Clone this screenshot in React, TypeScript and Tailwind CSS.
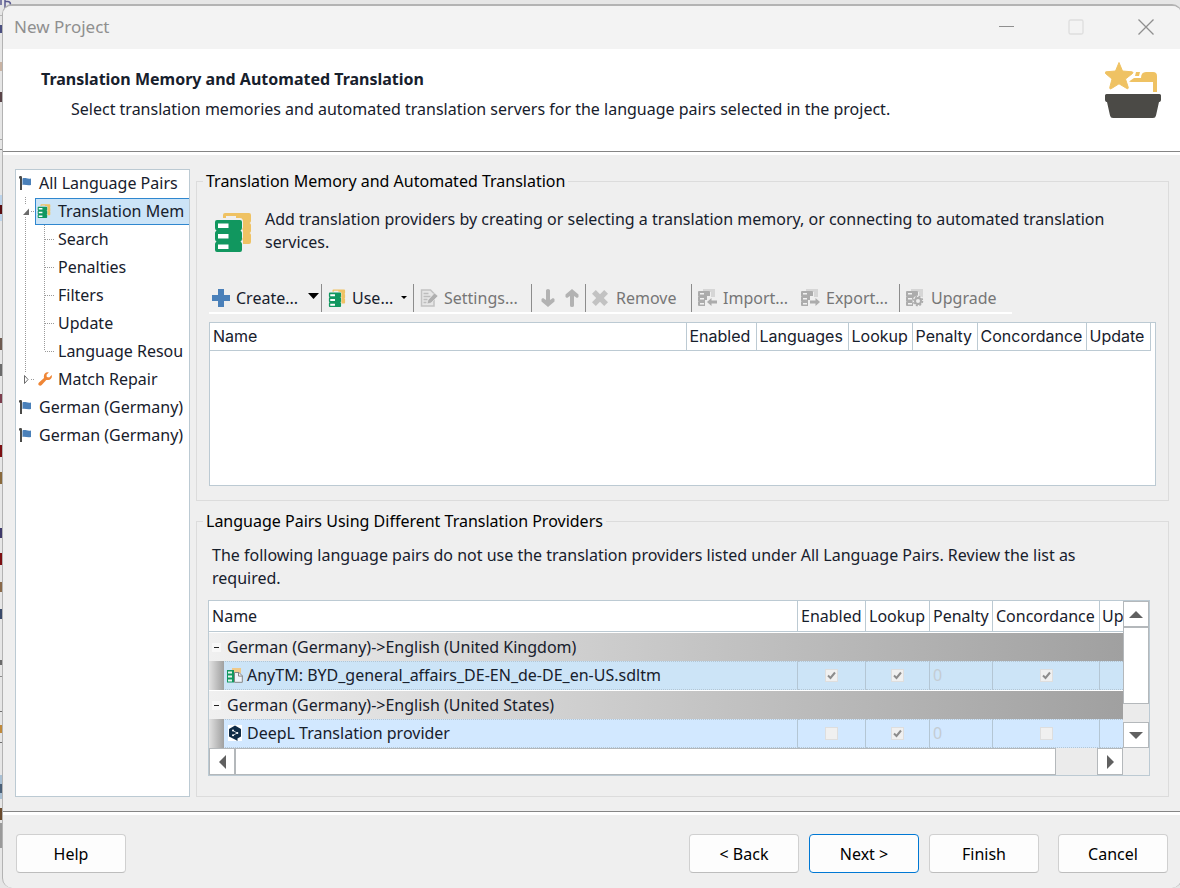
import React from "react";

const FlagIcon = () => (
    <svg width="12" height="14" viewBox="0 0 12 14" className="shrink-0" aria-hidden="true">
        <path d="M0 1.2C0 .5.6 0 1.5 0S3 .5 3 1.2V14H1V2.4H0z" fill="#4a4a48" />
        <path d="M3.5 2.5c2.5-1.4 5 1 8.5 0V9c-3.500 1-6-.8-8.500 0z" fill="#4a80b9" />
    </svg>
);

const MemoryIcon = ({ size }: { size: number }) => (
    <svg width={size} height={size} viewBox="0 0 38 40" className="shrink-0" aria-hidden="true">
        <path
            d="M9 6V3q0-2 2-2h24q2 0 2 2v6q0 1.500-1.500 2 1.500.6 1.500 2v6q0 1.500-1.500 2 1.500.6 1.500 2v7q0 2-2 2h-6V29q0-1.500-1-2 1-.6 1-2v-6q0-1.500-1-2 1-.6 1-2v-5q0-4-3-4h-4V4H12v2z"
            fill="#efc263"
        />
        <path
            d="M3 8h23q2 0 2 2v6q0 1.500-1.500 2.500Q28 19.500 28 21v6q0 1.500-1.500 2.500Q28 30.500 28 32v6q0 2-2 2H3q-2 0-2-2v-6q0-1.500 1.500-2.500Q1 28.500 1 27v-6q0-1.500 1.500-2.500Q1 17.500 1 16v-6q0-2 2-2z"
            fill="#11975f"
        />
        <path d="M4 11.500h10.500v4.500H4zM4 22h10.500v4.500H4zM4 32.500h10.500V37H4z" fill="#fff" />
    </svg>
);

const WrenchIcon = () => (
    <svg width="14" height="14" viewBox="0 0 14 14" className="shrink-0" aria-hidden="true">
        <path
            d="M10.800.4 8.500 2.700l.3 2.400 2.400.3 2.500-2.300c.8 2.400-.8 5-3.400 5-.8 0-1.500-.2-2-.1l-4.600 5c-.8.9-2 .9-2.800.2s-.8-2 .1-2.800l5-4.500C5.300 2.500 7.300-.4 10.800.4z"
            fill="#ef8636"
        />
    </svg>
);

const PlusIcon = () => (
    <svg width="18" height="18" viewBox="0 0 18 18" className="shrink-0" aria-hidden="true">
        <path d="M6 0h6v6h6v6h-6v6H6v-6H0V6h6z" fill="#4a80b9" />
    </svg>
);

const SettingsIcon = () => (
    <svg width="18" height="18" viewBox="0 0 18 18" className="shrink-0" aria-hidden="true">
        <path d="M1.500 1h9l3.500 3.500V17H1.500z" fill="#e6e6e6" stroke="#c2c2c2" strokeWidth="1.500" />
        <path d="M3.500 4.500h5M3.500 7.500h7M3.500 10.500h4M3.500 13.500h3" stroke="#bdbdbd" strokeWidth="1.500" />
        <path d="M7 15l1-4 6.500-7 3.500 3-7 7z" fill="#b0b0b0" stroke="#efefef" strokeWidth=".6" />
    </svg>
);

const ArrowIcon = ({ up }: { up?: boolean }) => (
    <svg width="14" height="18" viewBox="0 0 14 18" className={up ? "rotate-180" : ""} aria-hidden="true">
        <path d="M5 1.500Q5 0 7 0t2 1.500V11l3-2 1.500 1v2.500L7 18 .5 12.500V10L2 9l3 2z" fill="#b2b2b2" />
    </svg>
);

const RemoveIcon = () => (
    <svg width="16" height="16" viewBox="0 0 16 16" className="shrink-0" aria-hidden="true">
        <path d="M3.800 0 8 4.200 12.200 0 16 3.800 11.800 8l4.200 4.200-3.800 3.800L8 11.800 3.800 16 0 12.200 4.200 8 0 3.800z" fill="#c2c2c2" />
    </svg>
);

const TransferIcon = ({ kind }: { kind: "import" | "export" | "upgrade" }) => (
    <svg width="19" height="18" viewBox="0 0 19 18" className="shrink-0" aria-hidden="true">
        <path d="M5 0h12v8h-4V3H5z" fill="#d6d6d6" />
        <path d="M0 3q0-1 1-1h10q1 0 1 1v4H9v4H7v6H1q-1 0-1-1v-3l.6-.5L0 12V8l.6-.5L0 7z" fill="#acacac" />
        <path d="M2 4h4v1.500H2zM2 9h4v1.500H2zM2 14h4v1.500H2z" fill="#f2f2f2" />
        {kind === "import" && <path d="M9 13l4.500-4v2.500H19v3h-5.500V17z" fill="#acacac" />}
        {kind === "export" && <path d="M19 13l-4.500-4v2.500H9v3h5.500V17z" fill="#acacac" />}
        {kind === "upgrade" && (
            <>
                <circle cx="12" cy="12" r="5.500" fill="#efefef" />
                <circle cx="12" cy="12" r="3" fill="none" stroke="#acacac" strokeWidth="2" />
                <circle cx="12" cy="12" r="4.500" fill="none" stroke="#acacac" strokeWidth="1.500" strokeDasharray="2 1.530" />
            </>
        )}
    </svg>
);

const AnyTmIcon = () => (
    <svg width="16" height="15" viewBox="0 0 16 15" className="shrink-0" aria-hidden="true">
        <path d="M5 0h9v5H5z" fill="#efc98a" />
        <path d="M0 2h7v12.500H0z" fill="#11975f" />
        <path d="M1 3.500h4v2H1zM1 7.500h4v2H1zM1 11.500h4v2H1z" fill="#e8f5ef" />
        <path d="M7.500 4.500h4.500l3.300 3.300v6.500H7.500z" fill="#eef4fa" stroke="#858585" />
        <path d="M11.500 4.500v3.600h3.800" fill="none" stroke="#858585" />
    </svg>
);

const DeepLIcon = () => (
    <svg width="14" height="16" viewBox="0 0 14 16" className="shrink-0 bg-white" aria-hidden="true">
        <path d="M7 .5 13 4v7.500l-3.500 2V16L7 14.500 1 11.500V4z" fill="#0f2b46" />
        <path d="M5 5.500 9 8l-4 2.500" fill="none" stroke="#fff" strokeWidth=".7" />
        <circle cx="5" cy="5.600" r="1" fill="#fff" />
        <circle cx="9.300" cy="7.900" r="1" fill="#fff" />
        <circle cx="5" cy="10.300" r="1" fill="#fff" />
    </svg>
);

const WizardIcon = () => (
    <svg width="56" height="58" viewBox="0 0 56 58" className="shrink-0" aria-hidden="true">
        <path
            d="M14 1.500 17.500 10l9.500.8c1 .2 1.200 1 .5 1.700L20.500 18l2.800 8.500c.2 1-.6 1.500-1.500 1L14 22.800l-7.800 4.900c-.9.5-1.700-.1-1.500-1L7 18 .5 12.500c-.8-.7-.4-1.500.5-1.700l9.500-.8z"
            fill="#efc263"
            stroke="#efc263"
            strokeLinejoin="round"
        />
        <path d="M31 11h4l-1 4h-4zM24 20.500l5-3.500h7q0-6 5-6h7q4 0 4 4v16h-4V21H26z" fill="#efc263" />
        <path d="M1.500 33h53q1.500 0 1.500 1.500V39q0 1.500-1.500 2H54l-3 13.500q-.5 2.500-3 2.500H8q-2.500 0-3-2.500L2 41h-.5Q0 40.500 0 39v-4.500Q0 33 1.500 33z" fill="#4b4a46" />
    </svg>
);

type Branch = "open" | "closed" | "leaf" | "last";

const TreeLines = ({ branch }: { branch: Branch }) => (
    <svg width="42" height="28" viewBox="0 0 42 28" className="shrink-0" aria-hidden="true">
        <g stroke="#9a9a9a" strokeDasharray="1 1" fill="none">
            {branch === "closed" ? <path d="M9.500 0v8M15 14.500h4" /> : <path d="M9.500 0v28" />}
            {branch === "open" && <path d="M15 14.500h4" />}
            {branch === "leaf" && <path d="M28.500 0v28M29 14.500h9" />}
            {branch === "last" && <path d="M28.500 0v14M29 14.500h9" />}
        </g>
        {branch === "open" && <path d="M5 8h8v11H5z" fill="#fff" />}
        {branch === "open" && <path d="M13 11.500V18H7z" fill="#6b6b6b" />}
        {branch === "closed" && <path d="M8.500 10.500v8l3.500-4z" fill="#fff" stroke="#6b6b6b" />}
    </svg>
);

const leaves = ["Search", "Penalties", "Filters", "Update", "Language Resou"];

const NavigationTree = () => (
    <nav className="w-[175px] shrink-0 overflow-hidden border border-[#bccad3] bg-white whitespace-nowrap text-[#17202c]">
        <div className="-mt-px flex h-7 items-center gap-2 pl-[3px]">
            <FlagIcon />
            All Language Pairs
        </div>
        <div className="flex h-7 items-center">
            <div className="-mr-[23px]">
                <TreeLines branch="open" />
            </div>
            <div className="flex h-[27px] flex-1 items-center gap-[7px] border border-r-0 border-[#2f87cf] bg-[#cce4f7] pl-px">
                <MemoryIcon size={14} />
                Translation Mem
            </div>
        </div>
        {leaves.map((name, i) => (
            <div key={name} className="flex h-7 items-center">
                <TreeLines branch={i === leaves.length - 1 ? "last" : "leaf"} />
                {name}
            </div>
        ))}
        <div className="flex h-7 items-center">
            <div className="-mr-5">
                <TreeLines branch="closed" />
            </div>
            <div className="flex items-center gap-1.5">
                <WrenchIcon />
                Match Repair
            </div>
        </div>
        {[1, 2].map((n) => (
            <div key={n} className="flex h-7 items-center gap-2 pl-[3px]">
                <FlagIcon />
                German (Germany)
            </div>
        ))}
    </nav>
);

const Separator = () => <div className="h-7 w-px shrink-0 bg-[#8c8c8c]" />;

const Toolbar = () => (
    <div className="flex w-[803px] max-w-full items-start border-b-2 border-white whitespace-nowrap text-[#767676]">
        <button type="button" className="flex h-7 w-28 items-center gap-1.5 pl-[3px] text-[#17202c]">
            <PlusIcon />
            Create...
            <svg width="11" height="6" viewBox="0 0 11 6" className="mr-0.5 mb-1 ml-auto" aria-hidden="true">
                <path d="M0 0h11L5.500 6z" fill="#000" />
            </svg>
        </button>
        <Separator />
        <button type="button" className="flex h-7 w-[91px] items-center gap-1.5 pl-1.5 text-[#17202c]">
            <MemoryIcon size={18} />
            Use...
            <svg width="6" height="3" viewBox="0 0 6 3" className="mr-1.5 mb-0.5 ml-auto" aria-hidden="true">
                <path d="M0 0h6L3 3z" fill="#000" />
            </svg>
        </button>
        <Separator />
        <button type="button" disabled className="flex h-7 w-[117px] items-center gap-1.5 pl-1.5">
            <SettingsIcon />
            Settings...
        </button>
        <Separator />
        <button type="button" disabled aria-label="Move down" className="flex h-7 w-[31px] items-center justify-center">
            <ArrowIcon />
        </button>
        <button type="button" disabled aria-label="Move up" className="flex h-7 w-[22px] items-center pl-0.5">
            <ArrowIcon up />
        </button>
        <Separator />
        <button type="button" disabled className="flex h-7 w-[105px] items-center gap-2 pl-1.5">
            <RemoveIcon />
            Remove
        </button>
        <Separator />
        <button type="button" disabled className="flex h-7 w-[103px] items-center gap-1.5 pl-1.5">
            <TransferIcon kind="import" />
            Import...
        </button>
        <button type="button" disabled className="flex h-7 w-[104px] items-center gap-1.5 pl-1.5">
            <TransferIcon kind="export" />
            Export...
        </button>
        <Separator />
        <button type="button" disabled className="flex h-7 items-center gap-1.5 pl-1.5">
            <TransferIcon kind="upgrade" />
            Upgrade
        </button>
    </div>
);

const ProvidersTable = () => (
    <div className="min-h-[164px] flex-1 border border-[#bccad3] bg-white">
        <table className="w-full table-fixed border-collapse text-left font-['Inter','Liberation_Sans',sans-serif] text-[#17202c]">
            <colgroup>
                <col />
                <col className="w-[70px]" />
                <col className="w-[92px]" />
                <col className="w-16" />
                <col className="w-[65px]" />
                <col className="w-[109px]" />
                <col className="w-16" />
                <col className="w-[5px]" />
            </colgroup>
            <thead>
                <tr className="h-[27px]">
                    {["Name", "Enabled", "Languages", "Lookup", "Penalty", "Concordance", "Update"].map((title) => (
                        <th key={title} className="border-r border-b border-[#bccad3] pl-[3px] font-normal">
                            {title}
                        </th>
                    ))}
                    <td />
                </tr>
            </thead>
        </table>
    </div>
);

const Tick = ({ label, checked }: { label: string; checked: boolean }) => (
    <span className="mx-auto grid size-[13px] *:col-start-1 *:row-start-1">
        <input
            type="checkbox"
            aria-label={label}
            checked={checked}
            disabled
            readOnly
            className="size-[13px] appearance-none border border-[#dedede] bg-[#f0f0f0]"
        />
        {checked && (
            <svg width="13" height="13" viewBox="0 0 13 13" aria-hidden="true">
                <path d="M3 6.500 5.500 9 10 3.500" fill="none" stroke="#8c8c8c" strokeWidth="2" />
            </svg>
        )}
    </span>
);

const groups = [
    {
        title: "German (Germany)->English (United Kingdom)",
        provider: "AnyTM: BYD_general_affairs_DE-EN_de-DE_en-US.sdltm",
        icon: <AnyTmIcon />,
        row: "bg-[#cce4f7]",
        enabled: true,
        lookup: true,
        concordance: true,
    },
    {
        title: "German (Germany)->English (United States)",
        provider: "DeepL Translation provider",
        icon: <DeepLIcon />,
        row: "bg-[#d2e8ff]",
        enabled: false,
        lookup: true,
        concordance: false,
    },
];

const scrollButton = "flex items-center justify-center border border-[#b4b8bb] bg-white";

const PairsTable = () => (
    <div className="grid grid-cols-[minmax(0,1fr)_26px] border border-[#bccad3] bg-[#efefef]">
        <div className="overflow-hidden bg-white">
            <table className="w-full table-fixed border-separate border-spacing-0 text-left whitespace-nowrap text-[#17202c]">
                <colgroup>
                    <col />
                    <col className="w-[68px]" />
                    <col className="w-16" />
                    <col className="w-[63px]" />
                    <col className="w-[107px]" />
                    <col className="w-[23px]" />
                </colgroup>
                <thead>
                    <tr className="h-[31px]">
                        {["Name", "Enabled", "Lookup", "Penalty", "Concordance"].map((title) => (
                            <th key={title} className="border-r border-b border-[#bccad3] pl-[3px] font-normal">
                                {title}
                            </th>
                        ))}
                        <th className="border-b border-[#bccad3] pl-0.5 font-normal">Up</th>
                    </tr>
                </thead>
                <tbody>
                    {groups.map((g) => (
                        <React.Fragment key={g.title}>
                            <tr className="h-[29px]">
                                <td colSpan={6} className="border-t border-white bg-linear-to-r from-[#f0f0f0] to-[#a0a0a0] p-0">
                                    <button type="button" className="flex items-center gap-1.5 pl-[3px]">
                                        <svg width="9" height="9" viewBox="0 0 9 9" aria-hidden="true">
                                            <path d="M0 0h9v9H0z" fill="#f8f8f8" />
                                            <path d="M2 4.500h5" stroke="#222" />
                                        </svg>
                                        {g.title}
                                    </button>
                                </td>
                            </tr>
                            <tr className={`h-[29px] *:border-y *:[border-style:dotted_solid] *:border-[#b4c6d4] ${g.row}`}>
                                <td className="border-r p-0">
                                    <div className="-my-px flex h-[29px] items-center pb-px">
                                        <div className="mr-[3px] -mb-px h-[29px] w-[15px] bg-linear-to-r from-[#e2e2e2] to-[#a0a0a0]" />
                                        <span className="mr-1 flex w-4 justify-center">{g.icon}</span>
                                        {g.provider}
                                    </div>
                                </td>
                                <td className="border-r p-0">
                                    <Tick label="Enabled" checked={g.enabled} />
                                </td>
                                <td className="border-r p-0">
                                    <Tick label="Lookup" checked={g.lookup} />
                                </td>
                                <td className="border-r p-0 pb-0.5 pl-[3px] text-[#c4ccd3]">0</td>
                                <td className="border-r p-0">
                                    <Tick label="Concordance" checked={g.concordance} />
                                </td>
                                <td className="p-0" />
                            </tr>
                        </React.Fragment>
                    ))}
                </tbody>
            </table>
        </div>
        <div className="flex flex-col bg-[#ebebeb]">
            <button type="button" aria-label="Scroll up" className={`h-[26px] ${scrollButton}`}>
                <svg width="14" height="7" viewBox="0 0 14 7" aria-hidden="true">
                    <path d="M7 0l7 7H0z" fill="#606060" />
                </svg>
            </button>
            <div className="h-[77px] border border-[#b4b8bb] bg-white" />
            <button type="button" aria-label="Scroll down" className={`mt-auto h-[26px] ${scrollButton}`}>
                <svg width="14" height="7" viewBox="0 0 14 7" aria-hidden="true">
                    <path d="M0 0h14L7 7z" fill="#606060" />
                </svg>
            </button>
        </div>
        <div className="flex h-[27px] bg-[#ebebeb]">
            <button type="button" aria-label="Scroll left" className={`w-[26px] ${scrollButton}`}>
                <svg width="7" height="14" viewBox="0 0 7 14" aria-hidden="true">
                    <path d="M7 0v14L0 7z" fill="#606060" />
                </svg>
            </button>
            <div className="mr-[41px] flex-1 border border-[#b4b8bb] bg-white" />
            <button type="button" aria-label="Scroll right" className={`w-[26px] ${scrollButton}`}>
                <svg width="7" height="14" viewBox="0 0 7 14" aria-hidden="true">
                    <path d="M0 0l7 7-7 7z" fill="#606060" />
                </svg>
            </button>
        </div>
    </div>
);

const WizardButton = ({ children, primary }: { children: React.ReactNode; primary?: boolean }) => (
    <button
        type="button"
        className={`h-[39px] w-[110px] rounded border bg-[#fdfdfd] text-black ${primary ? "border-[#0078d4]" : "border-[#d0d0d0] border-b-[#bdbdbd]"}`}
    >
        {children}
    </button>
);

// slivers of the editor window behind the dialog
const backdrop = [
    [15, 1, "#b5b5b5"], [25, 8, "#4a4f80"], [62, 9, "#c9b3a3"], [92, 10, "#5a4448"], [139, 1, "#a8a8a8"], [149, 1, "#8a8a8a"],
    [195, 26, "#bcd3ea"], [205, 9, "#5a0d10"], [338, 12, "#6e5a50"], [364, 12, "#6b6b6b"], [394, 9, "#7c3c4c"], [445, 12, "#7d0f12"],
    [472, 12, "#8a6a3c"], [528, 10, "#3e3a6a"], [553, 12, "#7d0f12"], [582, 10, "#8a6a4a"], [609, 10, "#3a4a6a"], [660, 5, "#6b6b6b"],
    [676, 1, "#8c8c8c"], [711, 1, "#6f6f6f"], [725, 8, "#c08a3c"], [742, 1, "#6f6f6f"], [775, 24, "#a9c0d4"], [784, 9, "#4a6078"],
    [808, 12, "#6a4a2c"], [823, 25, "#9a9a9a"],
] as const;

const App = () => {
    return (
        <div className="relative flex min-h-screen flex-col overflow-hidden bg-[#e6e6e6] pt-1 pl-0.5 font-['Noto_Sans','Open_Sans',sans-serif] text-base leading-6">
            <svg className="absolute top-0 left-0 h-full w-3" aria-hidden="true">
                {backdrop.map(([y, h, fill]) => (
                    <rect key={y} x="0" y={y} width="3" height={h} fill={fill} />
                ))}
                <path d="M1 0v5M5 0v12M5 1.500h2.500q3 0 3 3T7.500 7.500H5" stroke="#5a5a90" strokeWidth="1.500" fill="none" />
            </svg>
            <div className="relative -mr-0.5 flex flex-1 flex-col overflow-hidden rounded-[10px] border-t-2 border-r border-l border-[#b3b3b3] bg-[#efefef]">
                <header className="flex h-[43px] items-center bg-[#f3f3f3] pb-0.5 pl-[11px] text-[#8f8f8f]">
                    <h1 className="flex-1 text-[17px]">New Project</h1>
                    <button type="button" aria-label="Minimize" className="flex w-[70px] justify-center">
                        <svg width="16" height="16" viewBox="0 0 16 16" aria-hidden="true">
                            <path d="M1 7.500h15" stroke="#8f8f8f" />
                        </svg>
                    </button>
                    <button type="button" disabled aria-label="Maximize" className="flex w-[70px] justify-center">
                        <svg width="16" height="16" viewBox="0 0 16 16" aria-hidden="true">
                            <rect x="1" y="1" width="14" height="14" rx="1.500" fill="none" stroke="#dedede" strokeWidth="1.300" />
                        </svg>
                    </button>
                    <button type="button" aria-label="Close" className="flex w-[70px] justify-center">
                        <svg width="16" height="16" viewBox="0 0 16 16" aria-hidden="true">
                            <path d="M.5.5l15 15M15.500.5l-15 15" stroke="#8f8f8f" strokeWidth="1.300" />
                        </svg>
                    </button>
                </header>

                <div className="flex items-start border-b border-[#858585] bg-white pt-3 pr-5 pb-[30px] pl-[38px] text-[#17202c]">
                    <div className="flex-1 pt-1.5">
                        <h2 className="font-bold">Translation Memory and Automated Translation</h2>
                        <p className="mt-1.5 pl-[30px]">
                            Select translation memories and automated translation servers for the language pairs selected in the project.
                        </p>
                    </div>
                    <WizardIcon />
                </div>

                <main className="flex flex-1 gap-1.5 border-t-3 border-white px-3 pt-[14px] pb-[14px]">
                    <NavigationTree />
                    <div className="flex min-w-0 flex-1 flex-col gap-2">
                        <fieldset className="flex min-w-0 flex-1 flex-col border border-[#dcdcdc] px-3 pb-[14px]">
                            <legend className="-ml-1.5 px-[3px] text-black">Translation Memory and Automated Translation</legend>
                            <div className="flex gap-3 pt-[15px] pl-1">
                                <div className="pt-1">
                                    <MemoryIcon size={40} />
                                </div>
                                <p className="pr-8 leading-[23px] text-[#17202c]">
                                    Add translation providers by creating or selecting a translation memory, or connecting to automated translation services.
                                </p>
                            </div>
                            <div className="mt-[30px] mb-2">
                                <Toolbar />
                            </div>
                            <ProvidersTable />
                        </fieldset>

                        <fieldset className="min-w-0 border border-[#dcdcdc] pr-[18px] pb-5 pl-[11px]">
                            <legend className="-ml-[5px] px-[3px] text-black">Language Pairs Using Different Translation Providers</legend>
                            <p className="pt-[11px] pr-12 pb-2.5 pl-1 leading-[23px] text-[#17202c]">
                                The following language pairs do not use the translation providers listed under All Language Pairs. Review the list as
                                required.
                            </p>
                            <PairsTable />
                        </fieldset>
                    </div>
                </main>

                <footer className="border-t border-[#858585]">
                    <div className="flex gap-2.5 border-t-3 border-white px-[13px] pt-[19px] pb-[15px]">
                        <div className="mr-auto">
                            <WizardButton>Help</WizardButton>
                        </div>
                        <WizardButton>&lt; Back</WizardButton>
                        <WizardButton primary>Next &gt;</WizardButton>
                        <WizardButton>Finish</WizardButton>
                        <div className="ml-[9px]">
                            <WizardButton>Cancel</WizardButton>
                        </div>
                    </div>
                </footer>
            </div>
        </div>
    );
};

export default App;
